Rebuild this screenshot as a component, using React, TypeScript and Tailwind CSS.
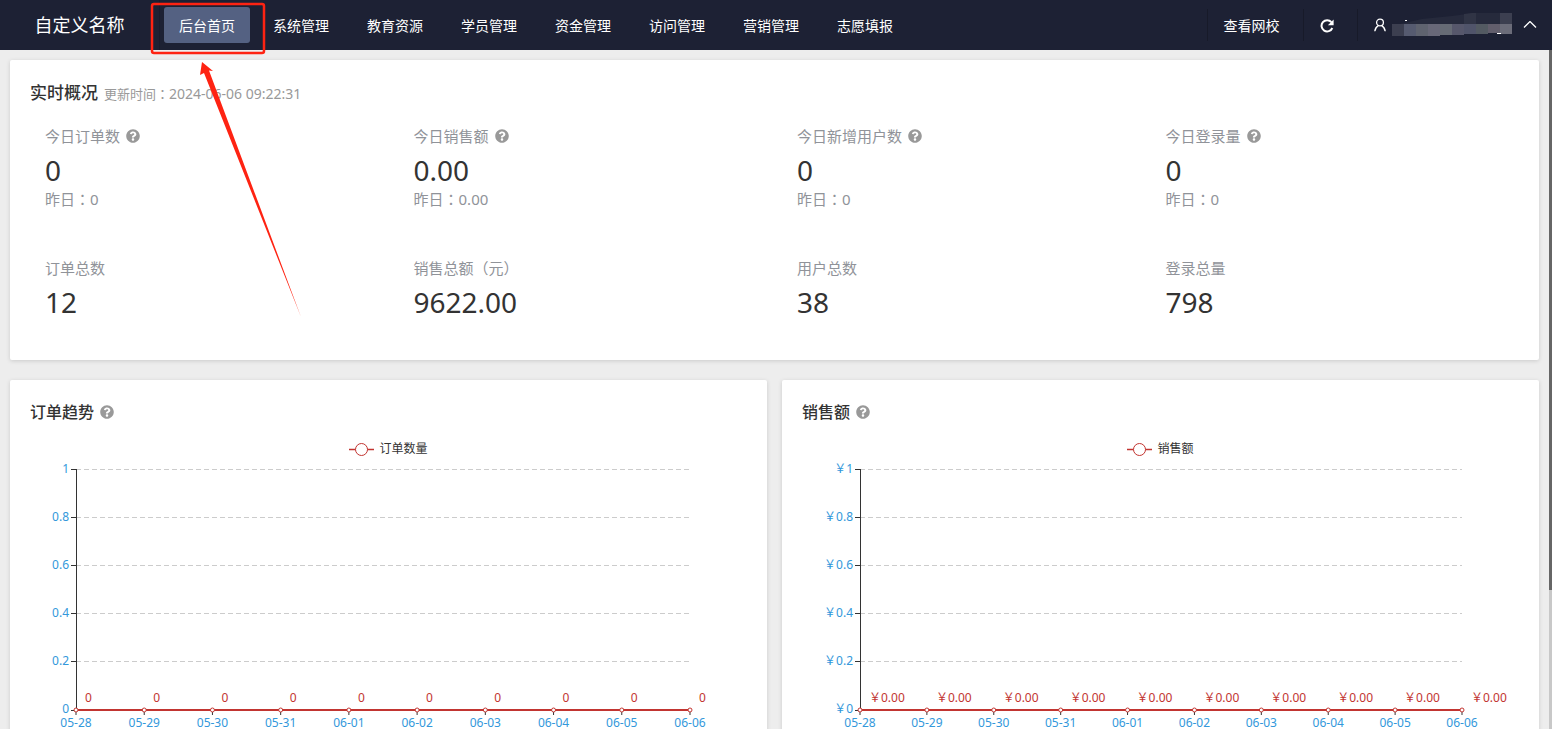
import { FaQuestionCircle } from 'react-icons/fa'

const menus = [
  '后台首页',
  '系统管理',
  '教育资源',
  '学员管理',
  '资金管理',
  '访问管理',
  '营销管理',
  '志愿填报',
]

type Stat = {
  label: string
  today: string
  yesterday: string
  totalLabel: string
  total: string
}

const statGroups: Stat[][] = [
  [
    { label: '今日订单数', today: '0', yesterday: '0', totalLabel: '订单总数', total: '12' },
    { label: '今日销售额', today: '0.00', yesterday: '0.00', totalLabel: '销售总额（元）', total: '9622.00' },
  ],
  [
    { label: '今日新增用户数', today: '0', yesterday: '0', totalLabel: '用户总数', total: '38' },
    { label: '今日登录量', today: '0', yesterday: '0', totalLabel: '登录总量', total: '798' },
  ],
]

const days = ['05-28', '05-29', '05-30', '05-31', '06-01', '06-02', '06-03', '06-04', '06-05', '06-06']
const ticks = ['1', '0.8', '0.6', '0.4', '0.2', '0']

// distance between two horizontal grid lines
const STEP = 48

function Help({ label }: { label: string }) {
  return (
    <button type="button" aria-label={label} className="text-[#999]">
      <FaQuestionCircle className="size-[14px]" />
    </button>
  )
}

// the TC face sets the colon in the middle of its box
function Colon() {
  return <span className="font-['Noto_Sans_CJK_TC',sans-serif]">：</span>
}

// user name is hidden behind a mosaic
const mosaic = [
  { x: 0, w: 12, h: 12, fill: '#3c3f50' },
  { x: 12, w: 12, h: 12, fill: '#565b70' },
  { x: 24, w: 12, h: 12, fill: '#5f636f' },
  { x: 36, w: 12, h: 12, fill: '#686878' },
  { x: 48, w: 12, h: 11, fill: '#666b75' },
  { x: 60, w: 12, h: 11, fill: '#56576b' },
  { x: 72, w: 12, h: 10, fill: '#50546a' },
  { x: 84, w: 12, h: 10, fill: '#535a62' },
  { x: 96, w: 12, h: 9, fill: '#625e6c' },
  { x: 108, w: 12, h: 10, fill: '#6b6c79' },
]

function Navbar() {
  return (
    <header className="flex h-[50px] shrink-0 bg-[#1d2134] text-sm text-white">
      <div className="flex w-[160px] items-center justify-center border-r border-[#191c2c] text-lg">
        自定义名称
      </div>
      <nav className="flex items-center gap-2 pl-1">
        {menus.map((name, i) => (
          <a
            key={name}
            href="#"
            className={
              i === 0
                ? 'rounded-[3px] bg-[#546182] px-[15px] pb-[7px] pt-[9px]'
                : 'rounded-[3px] px-[15px] pb-[7px] pt-[9px]'
            }
          >
            {name}
          </a>
        ))}
      </nav>
      <div className="ml-auto flex items-center">
        <a
          href="#"
          className="flex h-8 w-24 items-center justify-center border-l border-[#171a29] pr-2 pt-[2px]"
        >
          查看网校
        </a>
        <button
          type="button"
          aria-label="刷新"
          className="flex h-8 w-[54px] items-center justify-center border-l border-[#171a29] pr-2 pt-[2px]"
        >
          <svg viewBox="0 0 14 14" className="size-[14px]" fill="none">
            <path d="M11.400 3.200A5.600 5.600 0 1 0 12.300 9" stroke="#fff" strokeWidth="2" />
            <path d="M13.600 .500v5.700H7.900z" fill="#fff" />
          </svg>
        </button>
        <button
          type="button"
          aria-label="账户"
          className="flex h-8 w-[195px] items-center border-l border-[#171a29] pl-4"
        >
          <svg viewBox="0 0 12 14" className="h-[14px] w-3" fill="none" stroke="#fff" strokeWidth="1.3">
            <circle cx="6" cy="4.5" r="3.4" />
            <path d="M.8 13.2c.3-3 1.800-4.600 3.500-5.600M11.200 13.200c-.3-3-1.800-4.600-3.500-5.600" />
          </svg>
          <svg viewBox="0 1 120 24" className="ml-[6px] h-6 w-[120px]">
            <path d="M8 12 30 7 60 4 75 2 84 1V12z" fill="#262a3c" />
            <path d="M72 2 84 .5V12H72z" fill="#303445" />
            <path d="M84 1h24v11H84z" fill="#262a3c" />
            <path d="M108 1h12v11h-12z" fill="#3c3f50" />
            {mosaic.map((m) => (
              <rect key={m.x} x={m.x} y="12" width={m.w} height={m.h} fill={m.fill} />
            ))}
            <path d="M13 8h2v1h-2zM105 21h4v1h-4z" fill="#fff" />
          </svg>
          <svg viewBox="0 1 14 8" className="ml-[11px] h-2 w-[14px]" fill="none" stroke="#fff" strokeWidth="1.3">
            <path d="M1 7.5 7 1.5l6 6" />
          </svg>
        </button>
      </div>
    </header>
  )
}

function Overview() {
  return (
    <section className="rounded-[2px] bg-white px-5 pb-[35px] pt-5 shadow-[0_1px_4px_rgba(0,0,0,0.15)]">
      <div className="flex items-center gap-[6px]">
        <h2 className="text-[17px] font-medium leading-[26px]">实时概况</h2>
        <span className="pt-[2px] text-[13px] leading-[24px] text-[#999]">
          更新时间
          <Colon />
          <time className="text-sm leading-[24px]">2024-06-06 09:22:31</time>
        </span>
      </div>
      <div className="mt-[19px] grid grid-cols-2 gap-[15px]">
        {statGroups.map((group, i) => (
          <div key={i} className="grid grid-cols-2">
            {group.map((s) => (
              <dl key={s.label} className="pl-[15px]">
                <dt className="flex items-center gap-[6px] text-[15px] leading-[22px] text-[#909399]">
                  {s.label}
                  <Help label={s.label} />
                </dt>
                <dd className="text-[28px] leading-[46px]">{s.today}</dd>
                <dd className="text-[15px] leading-[12px] text-[#909399]">
                  昨日
                  <Colon />
                  {s.yesterday}
                </dd>
                <dt className="mt-[52px] text-[15px] leading-[22px] text-[#909399]">{s.totalLabel}</dt>
                <dd className="text-[28px] leading-[46px]">{s.total}</dd>
              </dl>
            ))}
          </div>
        ))}
      </div>
    </section>
  )
}

type ChartProps = {
  title: string
  series: string
  unit?: string
  value: string
  plotClass: string
}

function Chart({ title, series, unit = '', value, plotClass }: ChartProps) {
  const bottom = STEP * 5 + 1

  return (
    <section className="h-[400px] rounded-[2px] bg-white py-5 shadow-[0_1px_4px_rgba(0,0,0,0.15)]">
      <div className="flex items-center gap-[6px] px-5">
        <h2 className="text-base font-medium leading-[24px]">{title}</h2>
        <Help label={title} />
      </div>

      <div className="mt-4 flex items-center justify-center gap-[5px] text-xs leading-[18px]">
        <svg viewBox="0 0 25 14" className="h-[14px] w-[25px]" stroke="#c23531" fill="#fff">
          <path d="M0 7.5h25" strokeWidth="1.5" />
          <circle cx="12.5" cy="7.5" r="6" />
        </svg>
        {series}
      </div>

      <div className={plotClass}>
        <svg className="block h-[260px] w-full overflow-visible text-xs">
          {ticks.map((t, i) => {
            const y = i === 5 ? bottom : i * STEP
            return (
              <g key={t}>
                {i < 5 && (
                  <line x1="0" x2="100%" y1={y + 0.5} y2={y + 0.5} stroke="#ccc" strokeDasharray="5 3" />
                )}
                <path d={`M-5 ${y + 0.5}H0`} stroke="#333" />
                <text x="-7" y={i === 5 ? y + 3 : y + 4} textAnchor="end" fill="#3398db">
                  {unit + t}
                </text>
              </g>
            )
          })}
          <path d={`M.5 0V${bottom}`} stroke="#333" />
          <line x1="0" x2="100%" y1={bottom} y2={bottom} stroke="#c23531" strokeWidth="2" />
          {days.map((day, i) => {
            const x = `${(i / (days.length - 1)) * 100}%`
            return (
              <g key={day}>
                <line x1={x} x2={x} y1={bottom} y2={bottom + 5} stroke="#333" />
                <circle cx={x} cy={bottom} r="2" fill="#fff" stroke="#c23531" />
                <text x={x} dx="9" y={bottom - 8} fill="#c23531">
                  {unit + value}
                </text>
                <text x={x} y={bottom + 17} textAnchor="middle" fill="#3398db">
                  {day}
                </text>
              </g>
            )
          })}
        </svg>
      </div>
    </section>
  )
}

// red frame and arrow that point at the first menu item
function Pointer() {
  return (
    <svg className="pointer-events-none absolute left-[150px] top-0 h-[320px] w-[160px]" viewBox="0 0 160 320">
      <rect x="2" y="4" width="112" height="49" rx="2" fill="none" stroke="#fe2312" strokeWidth="2.5" />
      <path d="M52 62 63 71 59 70.5 151 317 54 73 50 75z" fill="#fe2312" />
    </svg>
  )
}

export default function App() {
  return (
    <div className="relative flex h-screen flex-col overflow-hidden bg-[#ededed] font-['Noto_Sans','Noto_Sans_CJK_SC',sans-serif] text-[#333]">
      <Navbar />
      <div className="flex min-h-0 flex-1">
        <main className="min-w-0 flex-1 overflow-y-auto p-[10px] [scrollbar-width:none]">
          <Overview />
          <div className="mt-5 grid grid-cols-2 gap-[15px]">
            <Chart title="订单趋势" series="订单数量" value="0" plotClass="mt-[11px] pl-[66px] pr-[77px]" />
            <Chart title="销售额" series="销售额" unit="￥" value="0.00" plotClass="mt-[11px] pl-[78px] pr-[77px]" />
          </div>
        </main>
        <div className="w-[3px] bg-[#c8c8c8]">
          <div className="h-[540px] bg-[#666]" />
        </div>
      </div>
      <Pointer />
    </div>
  )
}
